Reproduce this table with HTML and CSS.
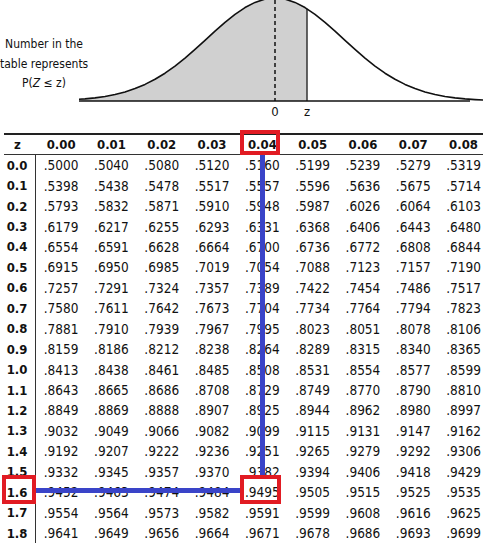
FILE: index.html
```html
<!DOCTYPE html>
<html>
<head>
	<meta charset="utf-8">
	<title>Standard normal table</title>
	<link rel="stylesheet" href="styles.css">
</head>
<body>
	<div class="figure">
		<div class="caption">Number in the<br>table represents<br>P(<i>Z</i> ≤ z)</div>
		<svg class="curve" viewBox="79 0 404 125">
			<path class="area" d="M80,101 L85,98.9 L95,97.9 L105,96.5 L115,94.5 L125,92 L135,88.6 L145,84.4 L155,79.3 L165,73.2 L175,66.1 L185,58.1 L195,49.4 L205,40.4 L215,31.2 L225,22.4 L235,14.4 L245,7.55 L255,2.4 L265,-0.9 L275,-2 L285,-0.9 L295,2.4 L305,7.55 L307,8.8 L307,101 Z"/>
			<line class="mean" x1="275" y1="0" x2="275" y2="101"/>
			<line class="zline" x1="307" y1="8.8" x2="307" y2="101"/>
			<path class="bell" d="M65,100.1 L75,99.6 L85,98.9 L95,97.9 L105,96.5 L115,94.5 L125,92 L135,88.6 L145,84.4 L155,79.3 L165,73.2 L175,66.1 L185,58.1 L195,49.4 L205,40.4 L215,31.2 L225,22.4 L235,14.4 L245,7.55 L255,2.4 L265,-0.9 L275,-2 L285,-0.9 L295,2.4 L305,7.55 L315,14.4 L325,22.4 L335,31.2 L345,40.4 L355,49.4 L365,58.1 L375,66.1 L385,73.2 L395,79.3 L405,84.4 L415,88.6 L425,92 L435,94.5 L445,96.5 L455,97.9 L465,98.9 L475,99.6 L485,100.1"/>
			<line class="axis" x1="79" y1="101" x2="470" y2="101"/>
			<text class="tick" x="275" y="116">0</text>
			<text class="tick" x="307" y="116">z</text>
		</svg>
	</div>

	<div class="tableWrap">
		<table class="ztable">
			<colgroup>
				<col class="zcol">
				<col class="vcol"><col class="vcol"><col class="vcol"><col class="vcol"><col class="vcol"><col class="vcol"><col class="vcol"><col class="vcol"><col class="vcol">
			</colgroup>
			<thead>
				<tr><th class="zhead">z</th><th>0.00</th><th>0.01</th><th>0.02</th><th>0.03</th><th>0.04</th><th>0.05</th><th>0.06</th><th>0.07</th><th>0.08</th></tr>
			</thead>
			<tbody>
				<tr><td class="zlab">0.0</td><td>.5000</td><td>.5040</td><td>.5080</td><td>.5120</td><td>.5160</td><td>.5199</td><td>.5239</td><td>.5279</td><td>.5319</td></tr>
				<tr><td class="zlab">0.1</td><td>.5398</td><td>.5438</td><td>.5478</td><td>.5517</td><td>.5557</td><td>.5596</td><td>.5636</td><td>.5675</td><td>.5714</td></tr>
				<tr><td class="zlab">0.2</td><td>.5793</td><td>.5832</td><td>.5871</td><td>.5910</td><td>.5948</td><td>.5987</td><td>.6026</td><td>.6064</td><td>.6103</td></tr>
				<tr><td class="zlab">0.3</td><td>.6179</td><td>.6217</td><td>.6255</td><td>.6293</td><td>.6331</td><td>.6368</td><td>.6406</td><td>.6443</td><td>.6480</td></tr>
				<tr><td class="zlab">0.4</td><td>.6554</td><td>.6591</td><td>.6628</td><td>.6664</td><td>.6700</td><td>.6736</td><td>.6772</td><td>.6808</td><td>.6844</td></tr>
				<tr><td class="zlab">0.5</td><td>.6915</td><td>.6950</td><td>.6985</td><td>.7019</td><td>.7054</td><td>.7088</td><td>.7123</td><td>.7157</td><td>.7190</td></tr>
				<tr><td class="zlab">0.6</td><td>.7257</td><td>.7291</td><td>.7324</td><td>.7357</td><td>.7389</td><td>.7422</td><td>.7454</td><td>.7486</td><td>.7517</td></tr>
				<tr><td class="zlab">0.7</td><td>.7580</td><td>.7611</td><td>.7642</td><td>.7673</td><td>.7704</td><td>.7734</td><td>.7764</td><td>.7794</td><td>.7823</td></tr>
				<tr><td class="zlab">0.8</td><td>.7881</td><td>.7910</td><td>.7939</td><td>.7967</td><td>.7995</td><td>.8023</td><td>.8051</td><td>.8078</td><td>.8106</td></tr>
				<tr><td class="zlab">0.9</td><td>.8159</td><td>.8186</td><td>.8212</td><td>.8238</td><td>.8264</td><td>.8289</td><td>.8315</td><td>.8340</td><td>.8365</td></tr>
				<tr><td class="zlab">1.0</td><td>.8413</td><td>.8438</td><td>.8461</td><td>.8485</td><td>.8508</td><td>.8531</td><td>.8554</td><td>.8577</td><td>.8599</td></tr>
				<tr><td class="zlab">1.1</td><td>.8643</td><td>.8665</td><td>.8686</td><td>.8708</td><td>.8729</td><td>.8749</td><td>.8770</td><td>.8790</td><td>.8810</td></tr>
				<tr><td class="zlab">1.2</td><td>.8849</td><td>.8869</td><td>.8888</td><td>.8907</td><td>.8925</td><td>.8944</td><td>.8962</td><td>.8980</td><td>.8997</td></tr>
				<tr><td class="zlab">1.3</td><td>.9032</td><td>.9049</td><td>.9066</td><td>.9082</td><td>.9099</td><td>.9115</td><td>.9131</td><td>.9147</td><td>.9162</td></tr>
				<tr><td class="zlab">1.4</td><td>.9192</td><td>.9207</td><td>.9222</td><td>.9236</td><td>.9251</td><td>.9265</td><td>.9279</td><td>.9292</td><td>.9306</td></tr>
				<tr><td class="zlab">1.5</td><td>.9332</td><td>.9345</td><td>.9357</td><td>.9370</td><td>.9382</td><td>.9394</td><td>.9406</td><td>.9418</td><td>.9429</td></tr>
				<tr><td class="zlab">1.6</td><td>.9452</td><td>.9463</td><td>.9474</td><td>.9484</td><td>.9495</td><td>.9505</td><td>.9515</td><td>.9525</td><td>.9535</td></tr>
				<tr><td class="zlab">1.7</td><td>.9554</td><td>.9564</td><td>.9573</td><td>.9582</td><td>.9591</td><td>.9599</td><td>.9608</td><td>.9616</td><td>.9625</td></tr>
				<tr><td class="zlab">1.8</td><td>.9641</td><td>.9649</td><td>.9656</td><td>.9664</td><td>.9671</td><td>.9678</td><td>.9686</td><td>.9693</td><td>.9699</td></tr>
			</tbody>
		</table>

		<!-- lookup marks: column 0.04, row 1.6 -->
		<div class="guide guideCol"></div>
		<div class="guide guideRow"></div>
		<div class="mark markHead"></div>
		<div class="mark markRow"></div>
		<div class="mark markCell"></div>
	</div>
</body>
</html>
```

FILE: styles.css
```css
html, body{
	margin: 0;
	overflow: hidden;
	background: #fff;
}
body{
	width: 483px;
	height: 546px;
	font-family: "Liberation Sans Narrow", "DejaVu Sans Condensed", "Liberation Sans", sans-serif;
	color: #111;
}

/* ---- bell curve figure ---- */
.figure{
	display: flex;
	height: 125px;
}
.caption{
	width: 88px;
	flex: none;
	margin-right: -9px;
	padding-top: 35px;
	text-align: center;
	font-size: 12px;
	line-height: 19.5px;
	white-space: nowrap;
}
.caption i{
	font-style: italic;
}
.curve{
	width: 404px;
	height: 125px;
	flex: none;
}
.area{
	fill: #d0d0d0;
	stroke: none;
}
.bell{
	fill: none;
	stroke: #111;
	stroke-width: 1.6;
	stroke-linejoin: round;
}
.axis{
	stroke: #111;
	stroke-width: 1.6;
}
.mean{
	stroke: #111;
	stroke-width: 1.5;
	stroke-dasharray: 4 3;
}
.zline{
	stroke: #333;
	stroke-width: 1.5;
}
.tick{
	font-size: 13px;
	text-anchor: middle;
	fill: #111;
}

/* ---- z table ---- */
.tableWrap{
	position: relative;
	margin-top: 8px;
	margin-left: 4px;
}
.ztable{
	border-collapse: separate;
	border-spacing: 0;
	table-layout: fixed;
	width: 484.7px;
}
.zcol{
	width: 32px;
}
.vcol{
	width: 50.3px;
}
.ztable th{
	height: 19px;
	padding: 0;
	font-size: 13px;
	font-weight: bold;
	text-align: center;
	border-top: 2px solid #222;
	border-bottom: 1px solid #333;
}
.ztable th.zhead{
	padding-right: 5px;
}
.ztable td{
	height: 20.45px;
	padding: 0;
	font-size: 13.5px;
	text-align: center;
}
.ztable td.zlab{
	padding-right: 5px;
	font-size: 13px;
	font-weight: bold;
	border-right: 1.5px solid #333;
}

/* ---- lookup marks ---- */
.guide{
	position: absolute;
	background: #3a44c8;
}
.guideCol{
	left: 255.5px;
	top: 22px;
	width: 5px;
	height: 320px;
}
.guideRow{
	left: 32px;
	top: 355px;
	width: 204px;
	height: 5px;
}
.mark{
	position: absolute;
	box-sizing: border-box;
	border: 4px solid #e11b23;
}
.markHead{
	left: 236px;
	top: -3px;
	width: 40px;
	height: 25px;
}
.markRow{
	left: -2px;
	top: 342px;
	width: 34px;
	height: 29px;
}
.markCell{
	left: 236px;
	top: 342px;
	width: 41px;
	height: 29px;
}
```
